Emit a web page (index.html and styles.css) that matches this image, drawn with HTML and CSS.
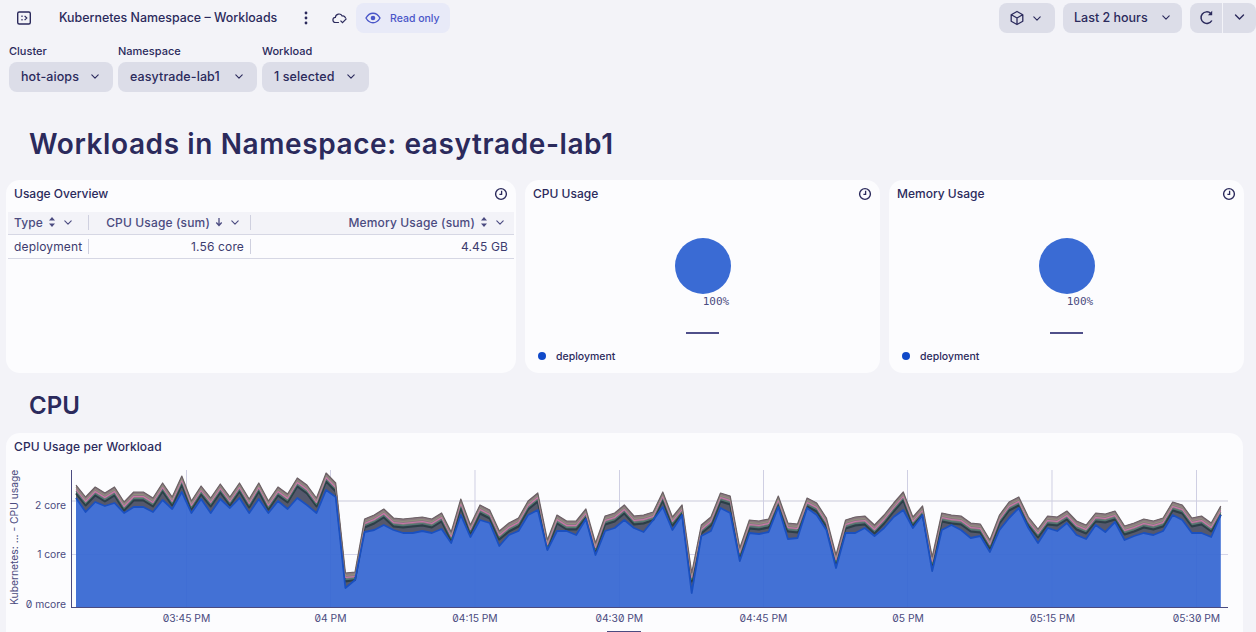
FILE: index.html
```html
<!DOCTYPE html>
<html lang="en">
<head>
  <meta charset="UTF-8">
  <title>Kubernetes Namespace - Workloads</title>
  <link rel="stylesheet" href="styles.css">
</head>
<body>
  <svg class="defs" width="0" height="0">
    <symbol id="chev" viewBox="0 0 10 6"><path d="M1 1l4 4 4-4" fill="none" stroke="currentColor" stroke-width="1.4" stroke-linecap="round" stroke-linejoin="round"/></symbol>
    <symbol id="sort" viewBox="0 0 8 12"><path d="M4 1l3 3.5H1zM4 11L1 7.5h6z" fill="currentColor"/></symbol>
    <symbol id="clock" viewBox="0 0 14 14"><circle cx="7" cy="7" r="5.4" fill="none" stroke="currentColor" stroke-width="1.4"/><path d="M7.600 3.800V7.400H5.400" fill="none" stroke="currentColor" stroke-width="1.3"/></symbol>
  </svg>

  <header class="topbar">
    <div class="topbar-left">
      <svg class="ic-panel" width="16" height="16" viewBox="0 0 16 16"><rect x="1.700" y="2" width="12.600" height="12" rx="1.500" fill="none" stroke="currentColor" stroke-width="1.400"/><path d="M6 5.500v1.500M6 9v1.500M8.600 5.800l2.200 2.200-2.200 2.200" fill="none" stroke="currentColor" stroke-width="1.200"/></svg>
      <span class="doc-title">Kubernetes Namespace – Workloads</span>
      <svg class="ic-dots" width="4" height="14" viewBox="0 0 4 14"><circle cx="2" cy="2" r="1.400" fill="currentColor"/><circle cx="2" cy="7" r="1.400" fill="currentColor"/><circle cx="2" cy="12" r="1.400" fill="currentColor"/></svg>
      <svg class="ic-cloud" width="16" height="12" viewBox="0 0 16 12"><path d="M6.500 10.500H3.600A2.600 2.600 0 0 1 3.400 5.300 3.600 3.600 0 0 1 10.200 4a2.800 2.800 0 0 1 3.300 2" fill="none" stroke="currentColor" stroke-width="1.200" stroke-linecap="round"/><path d="M8.500 8.600l2 2 4-4" fill="none" stroke="currentColor" stroke-width="1.200"/></svg>
      <div class="readonly">
        <svg width="16" height="12" viewBox="0 0 16 12"><path d="M1 6c1.800-3.200 4.200-4.800 7-4.800S13.200 2.800 15 6c-1.800 3.200-4.200 4.800-7 4.800S2.800 9.200 1 6z" fill="none" stroke="currentColor" stroke-width="1.400"/><circle cx="8" cy="6" r="2.300" fill="currentColor"/></svg>
        <span>Read only</span>
      </div>
    </div>
    <div class="topbar-right">
      <button class="btn btn-cube">
        <svg width="16" height="16" viewBox="0 0 16 16"><path d="M8 1.500l5.800 3.200v6.600L8 14.500l-5.800-3.200V4.700zM2.400 4.800L8 8l5.600-3.200M8 8v6.400" fill="none" stroke="currentColor" stroke-width="1.300" stroke-linejoin="round"/></svg>
        <svg class="chev" width="8" height="5"><use href="#chev"/></svg>
      </button>
      <button class="btn btn-time">Last 2 hours <svg class="chev" width="8" height="5"><use href="#chev"/></svg></button>
      <div class="btn-group">
        <button class="btn btn-refresh">
          <svg width="15" height="15" viewBox="0 0 14 14"><path d="M11 3.200A5.400 5.400 0 1 0 12 9.800" fill="none" stroke="currentColor" stroke-width="1.400"/><path d="M12.300 .8v4H8.300z" fill="currentColor"/></svg>
        </button>
        <button class="btn btn-more"><svg width="11" height="6"><use href="#chev"/></svg></button>
      </div>
    </div>
  </header>

  <section class="filters">
    <div class="filter">
      <label>Cluster</label>
      <button class="btn select">hot-aiops <svg class="chev" width="8" height="5"><use href="#chev"/></svg></button>
    </div>
    <div class="filter">
      <label>Namespace</label>
      <button class="btn select">easytrade-lab1 <svg class="chev" width="8" height="5"><use href="#chev"/></svg></button>
    </div>
    <div class="filter">
      <label>Workload</label>
      <button class="btn select">1 selected <svg class="chev" width="8" height="5"><use href="#chev"/></svg></button>
    </div>
  </section>

  <h1 class="page-title">Workloads in Namespace: easytrade-lab1</h1>

  <section class="overview">
    <div class="card">
      <div class="card-head">
        <span>Usage Overview</span>
        <svg class="clock" width="14" height="14"><use href="#clock"/></svg>
      </div>
      <div class="tbl">
        <div class="tbl-row tbl-header">
          <div class="cell c-type">Type <svg class="sm" width="8" height="12"><use href="#sort"/></svg><svg class="chev-sm" width="8" height="5"><use href="#chev"/></svg></div>
          <div class="cell c-cpu">CPU Usage (sum)
            <svg class="sm" width="8" height="10" viewBox="0 0 8 10"><path d="M4 1v7M1.300 5.500L4 8.500l2.700-3" fill="none" stroke="currentColor" stroke-width="1.300"/></svg><svg class="chev-sm" width="8" height="5"><use href="#chev"/></svg></div>
          <div class="cell c-mem">Memory Usage (sum) <svg class="sm" width="8" height="12"><use href="#sort"/></svg><svg class="chev-sm" width="8" height="5"><use href="#chev"/></svg></div>
        </div>
        <div class="tbl-row tbl-body">
          <div class="cell c-type">deployment</div>
          <div class="cell c-cpu">1.56 core</div>
          <div class="cell c-mem">4.45 GB</div>
        </div>
      </div>
    </div>

    <div class="card">
      <div class="card-head">
        <span>CPU Usage</span>
        <svg class="clock" width="14" height="14"><use href="#clock"/></svg>
      </div>
      <div class="pie-area">
        <div class="pie"></div>
        <div class="pie-label">100%</div>
        <div class="pie-rule"></div>
      </div>
      <div class="legend"><i class="dot"></i>deployment</div>
    </div>

    <div class="card">
      <div class="card-head">
        <span>Memory Usage</span>
        <svg class="clock" width="14" height="14"><use href="#clock"/></svg>
      </div>
      <div class="pie-area">
        <div class="pie"></div>
        <div class="pie-label">100%</div>
        <div class="pie-rule"></div>
      </div>
      <div class="legend"><i class="dot"></i>deployment</div>
    </div>
  </section>

  <h2 class="section-title">CPU</h2>

  <section class="card chart-card">
    <div class="card-head"><span>CPU Usage per Workload</span></div>
    <svg id="cpu-chart" class="chart" width="1237" height="180" viewBox="6 460 1237 180">
      <g id="layers"></g>
      <g class="axis-text">
        <text x="66" y="509" text-anchor="end">2 core</text>
        <text x="66" y="558" text-anchor="end">1 core</text>
        <text x="66" y="608" text-anchor="end">0 mcore</text>
        <text class="y-title" transform="translate(18 605) rotate(-90)">Kubernetes: ... - CPU usage</text>
        <text x="186.500" y="622" text-anchor="middle">03:45 PM</text>
        <text x="330.500" y="622" text-anchor="middle">04 PM</text>
        <text x="475" y="622" text-anchor="middle">04:15 PM</text>
        <text x="619.300" y="622" text-anchor="middle">04:30 PM</text>
        <text x="763.500" y="622" text-anchor="middle">04:45 PM</text>
        <text x="908" y="622" text-anchor="middle">05 PM</text>
        <text x="1052.500" y="622" text-anchor="middle">05:15 PM</text>
        <text x="1196.500" y="622" text-anchor="middle">05:30 PM</text>
      </g>
      <rect x="607" y="631" width="34" height="1" fill="#4b4b80"/>
    </svg>
  </section>

  <script src="chart.js"></script>
</body>
</html>
```

FILE: styles.css
```css
* {
  box-sizing: border-box;
}

html,
body {
  height: 632px;
  overflow: hidden;
}

body {
  margin: 0;
  background: #f3f3f8;
  color: #2b2a5c;
  font-family: Inter, "Noto Sans", sans-serif;
  font-size: 13px;
}

.defs {
  position: absolute;
}

button {
  font-family: inherit;
  border: none;
  color: inherit;
}

.topbar {
  display: flex;
  justify-content: space-between;
  align-items: center;
  height: 36px;
}

.topbar-left {
  display: flex;
  align-items: center;
}

.ic-panel {
  margin-left: 16px;
}

.doc-title {
  margin-left: 27px;
  padding-bottom: 1px;
  font-size: 12.400px;
  font-weight: 500;
  width: 218px;
  white-space: nowrap;
}

.ic-dots {
  margin-left: 27px;
}

.ic-cloud {
  margin-left: 24px;
}

.readonly {
  display: flex;
  align-items: center;
  gap: 9px;
  height: 30px;
  width: 94px;
  margin-left: 8px;
  padding-left: 9px;
  background: #e8eaf8;
  border-radius: 8px;
  color: #4a56c8;
  font-size: 10.500px;
  font-weight: 500;
}

.topbar-right {
  display: flex;
  gap: 8px;
}

.btn {
  display: flex;
  align-items: center;
  justify-content: space-between;
  height: 30px;
  background: #dcdde8;
  border-radius: 8px;
  font-size: 12.500px;
  font-weight: 500;
  white-space: nowrap;
  padding: 0 0 2px;
}

.btn-cube {
  width: 56px;
  padding: 0 14px 0 10px;
}

.btn-time {
  width: 119px;
  padding: 0 12px 2px 11px;
}

.btn-group {
  display: flex;
  gap: 1px;
}

.btn-refresh {
  width: 32px;
  justify-content: center;
  border-radius: 8px 0 0 8px;
}

.btn-more {
  width: 33px;
  justify-content: center;
  border-radius: 0 8px 8px 0;
}

.filters {
  display: grid;
  grid-template-columns: 104px 139px 107px;
  gap: 5px;
  height: 56px;
  padding-left: 9px;
  padding-top: 8px;
}

.filter label {
  display: block;
  font-size: 11px;
  font-weight: 500;
  height: 18px;
  line-height: 14px;
}

.select {
  width: 100%;
  padding: 0 14px 2px 12px;
  letter-spacing: 0.1px;
}

.page-title {
  margin: 36px 0 0 29px;
  height: 52px;
  line-height: 32px;
  font-size: 28px;
  font-weight: 600;
  letter-spacing: 0.6px;
}

.overview {
  display: grid;
  grid-template-columns: 510px 355px 355px;
  gap: 9px;
  margin-left: 6px;
  height: 193px;
}

.card {
  background: #fcfcfe;
  border-radius: 14px;
  padding: 0 2px;
  display: flex;
  flex-direction: column;
}

.card-head {
  display: flex;
  justify-content: space-between;
  align-items: center;
  height: 32px;
  padding: 0 6px 5px;
  font-size: 12px;
  font-weight: 500;
}

.clock {
  color: #2b2a5c;
  margin-top: 1px;
}

.tbl-row {
  display: flex;
  align-items: center;
}

.tbl-header {
  height: 23px;
  padding-bottom: 2px;
  background: #f3f3f8;
  border-bottom: 1px solid #d6d7e4;
  color: #4b4b80;
  font-weight: 500;
}

.tbl-header .cell {
  gap: 5px;
  letter-spacing: 0.15px;
}

.tbl-header .c-cpu {
  padding-right: 11px;
}

.tbl-header .c-mem {
  padding-right: 10px;
}

.tbl-body {
  height: 24px;
  border-bottom: 1px solid #d6d7e4;
  color: #3c3b6e;
}

.cell {
  display: flex;
  align-items: center;
  justify-content: flex-end;
  height: 15px;
  font-size: 12px;
  white-space: nowrap;
  gap: 4px;
  padding-right: 6px;
  letter-spacing: 0.15px;
}

.c-type {
  width: 81px;
  justify-content: flex-start;
  padding-left: 6px;
  border-right: 1px solid #cfd0df;
}

.c-cpu {
  width: 162px;
  border-right: 1px solid #cfd0df;
}

.c-mem {
  flex: 1;
}

.chev-sm {
  margin-left: 3px;
}

.pie-area {
  flex: 1;
  display: flex;
  flex-direction: column;
  align-items: center;
}

.pie {
  width: 56px;
  height: 56px;
  margin-top: 26px;
  border-radius: 50%;
  background: #3a6bd4;
}

.pie-label {
  margin-top: 1px;
  margin-left: 27px;
  height: 14px;
  line-height: 14px;
  font-family: "DejaVu Sans Mono", monospace;
  font-size: 11px;
  color: #4b4b80;
}

.pie-rule {
  width: 33px;
  height: 2px;
  margin-top: 23px;
  background: #4f4f8a;
}

.legend {
  display: flex;
  align-items: center;
  height: 34px;
  padding: 0 0 0 11px;
  font-size: 10.500px;
  font-weight: 500;
}

.dot {
  width: 8px;
  height: 8px;
  border-radius: 50%;
  background: #1049c9;
  margin-right: 10px;
}

.section-title {
  margin: 0 0 0 29px;
  height: 60px;
  padding-top: 17px;
  line-height: 32px;
  font-size: 24px;
  font-weight: 600;
}

.chart-card {
  margin-left: 6px;
  width: 1237px;
  height: 230px;
  padding: 0;
}

.chart-card .card-head {
  height: 27px;
  padding: 0 8px;
  flex: none;
  letter-spacing: 0.1px;
}

.chart {
  display: block;
  flex: none;
}

.axis-text text {
  font-family: Inter, sans-serif;
  font-feature-settings: "zero";
  font-size: 10.300px;
  fill: #4b4b80;
}
```

FILE: chart.js
```js
// cpu area chart, one sample per minute
var baseline = 607;
var x0 = 76;
var step = 9.62;

var topLine = [485,497,487,493,487,502,492,492,498,483,497,476,501,486,498,484,497,483,499,483,501,487,494,478,485,498,473,483,573,572,519,515,509,518,519,518,
  517,519,513,532,499,525,505,510,531,523,518,501,493,540,515,521,521,509,543,516,513,505,516,515,512,492,517,505,573,525,517,493,496,548,520,521,519,496,523,524,498,503,518,555,
  520,517,516,525,515,503,492,517,506,557,513,515,516,523,524,540,515,502,497,517,529,516,517,511,521,525,513,514,511,526,523,519,521,518,502,505,518,516,523,506];

var blueLine = [498,512,502,506,503,513,507,507,512,500,509,492,513,499,513,499,508,498,513,499,513,501,509,498,505,513,490,497,588,580,532,530,525,530,533,533,
  531,533,529,543,515,537,520,523,546,535,531,515,510,550,531,531,535,519,555,531,528,520,528,532,520,507,530,515,593,536,531,508,513,561,533,534,532,507,539,538,508,515,530,568,
  533,533,528,536,528,517,510,528,515,571,530,525,530,538,536,552,530,518,508,528,543,528,531,523,535,539,525,532,522,540,536,533,535,531,515,520,533,533,537,515];

function px(i) {
  return (x0 + i * step).toFixed(1);
}

// line this many px under the top edge, never below the blue area
function offsetLine(off) {
  return topLine.map(function (y, i) {
    return px(i) + ',' + Math.min(y + off, blueLine[i]);
  });
}

function areaDown(pts, lower) {
  var d = 'M' + pts.join('L');
  if (lower) {
    d += 'L' + lower.slice().reverse().join('L');
  } else {
    d += 'L' + px(pts.length - 1) + ',' + baseline + 'L' + x0 + ',' + baseline;
  }
  return d + 'Z';
}

var ns = 'http://www.w3.org/2000/svg';
var layers = document.getElementById('layers');

function add(tag, attrs) {
  var el = document.createElementNS(ns, tag);
  for (var k in attrs) el.setAttribute(k, attrs[k]);
  layers.appendChild(el);
}

function line(x1, y1, x2, y2, color, w) {
  add('line', { x1: x1, y1: y1, x2: x2, y2: y2, stroke: color, 'stroke-width': w });
}

// grid behind the areas
line(72, 501, 1228, 501, '#e3e3ec', 2);
line(72, 554.5, 1228, 554.5, '#d5d5ea', 1);
[186.5, 330.5, 475, 619.5, 763.5, 907.5, 1052, 1196.5].forEach(function (x) {
  line(x, 470, x, 607, '#cfcfe3', 1);
});

var blue = blueLine.map(function (y, i) { return px(i) + ',' + y; });
var top0 = offsetLine(0);

add('path', { d: areaDown(top0, blue), fill: '#55586c' });
add('path', { d: areaDown(top0, offsetLine(6)), fill: '#8a7880' });
add('path', { d: areaDown(blue), fill: '#3768d2', 'fill-opacity': 0.94 });

function stroke(pts, color, w) {
  add('path', { d: 'M' + pts.join('L'), fill: 'none', stroke: color, 'stroke-width': w, 'stroke-linejoin': 'round' });
}

stroke(offsetLine(8.5), '#2c3f48', 2);
stroke(offsetLine(6.5), '#4f8a72', 0.8);
stroke(offsetLine(4.5), '#c978aa', 1.1);
stroke(offsetLine(2.5), '#93987e', 0.8);
stroke(top0, '#6d6266', 1.2);
stroke(blue, '#1a50c0', 1.8);

// axes on top
line(71.5, 470, 71.5, 607.5, '#4b4b80', 1);
line(71, 607.5, 1228, 607.5, '#4b4b80', 1);
```
